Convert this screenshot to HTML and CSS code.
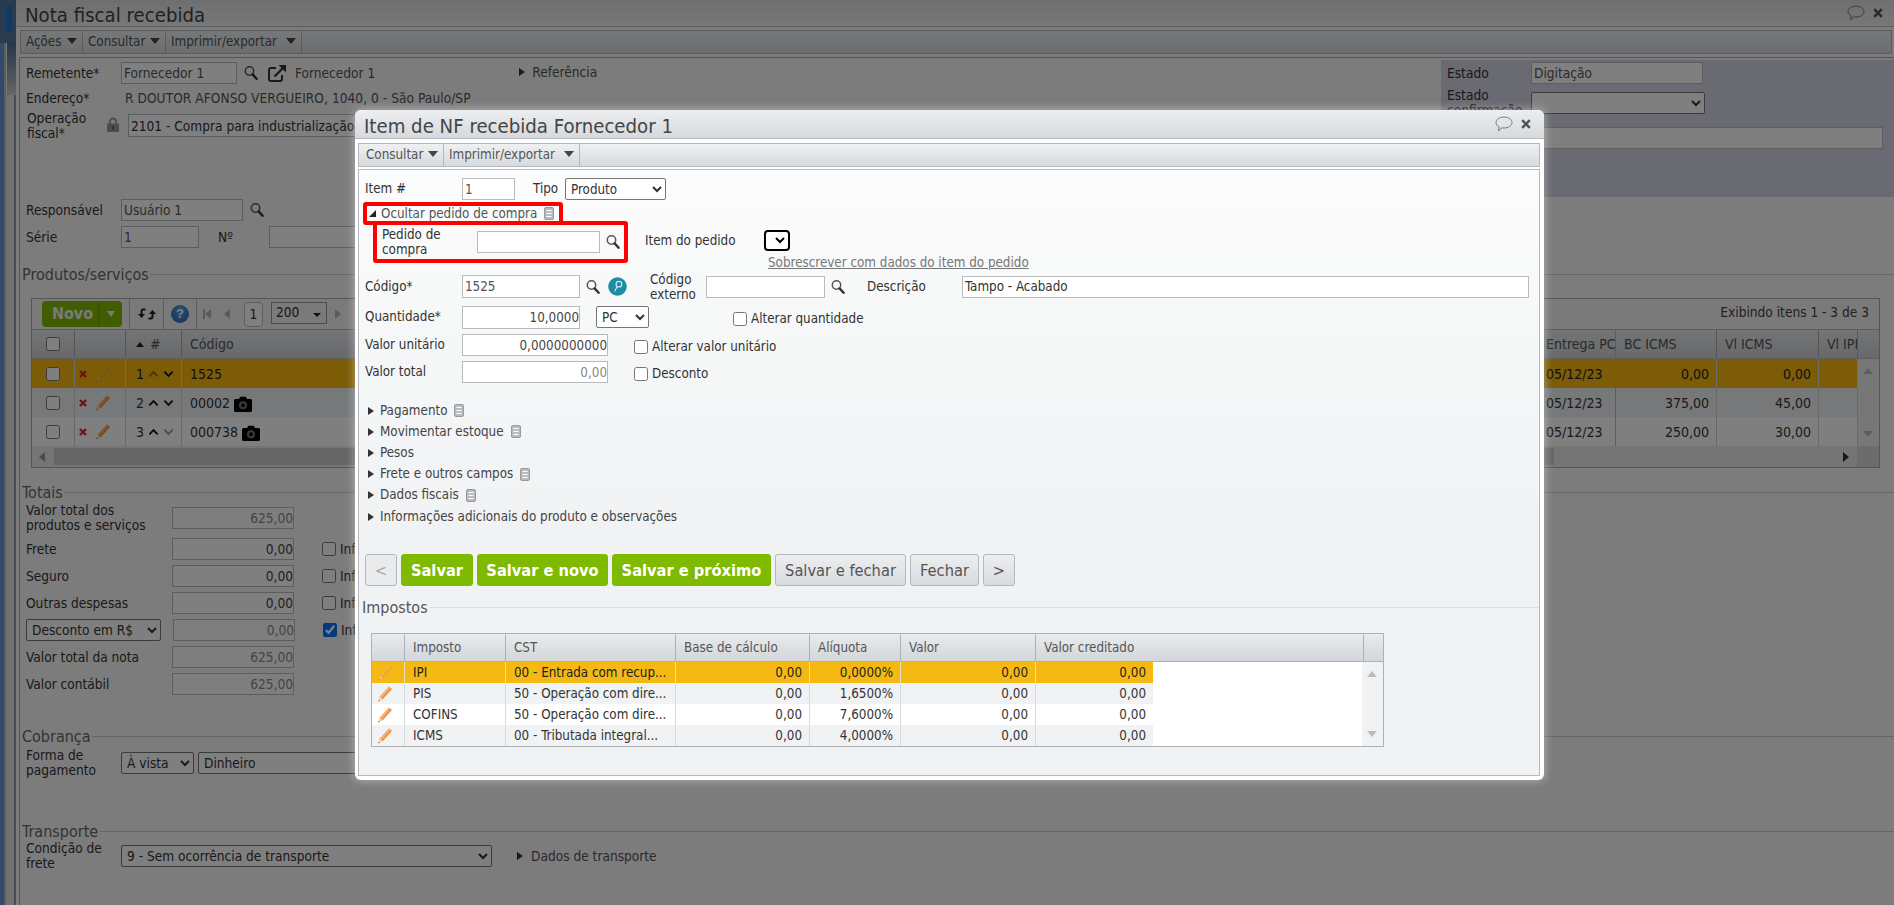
FILE: index.html
```html
<!DOCTYPE html>
<html lang="pt-BR">
<head>
<meta charset="utf-8">
<title>Nota fiscal recebida</title>
<link rel="stylesheet" href="styles.css">
</head>
<body>
<svg class="defs" aria-hidden="true">
  <symbol id="search" viewBox="0 0 14 16"><circle cx="5.500" cy="6" r="4.200" fill="#fff" fill-opacity=".25" stroke="#555" stroke-width="1.500"/><path d="M8.600 9.400l4 4.400" stroke="#333" stroke-width="2.400" stroke-linecap="round"/></symbol>
  <symbol id="doc" viewBox="0 0 10 13"><rect x=".5" y=".5" width="9" height="12" rx="1.500" fill="#b9bcbe" stroke="#999"/><path d="M2.500 3.500h5M2.500 6.500h5M2.500 9.500h5" stroke="#fff" stroke-width="1.200"/></symbol>
  <symbol id="pencil" viewBox="0 0 16 17"><path d="M12 1.500l3 2.500-9.500 10.500-3-2.500z" fill="#f0923b"/><path d="M12 1.500l1.500 1.200L4 13.400 2.500 12z" fill="#f6b276"/><path d="M2.500 12l3 2.500-4.200 1.800z" fill="#f4dcb8"/><path d="M1.900 14.800l1 .9-1.600.6z" fill="#444"/></symbol>
  <symbol id="cross" viewBox="0 0 8 8"><path d="M1 1l6 6M7 1L1 7" stroke="#d4262c" stroke-width="2.400"/></symbol>
  <symbol id="camera" viewBox="0 0 18 16"><path d="M1.500 3H5l1.200-2.200h5.600L13 3h3.500A1.500 1.500 0 0 1 18 4.500v10a1.500 1.500 0 0 1-1.500 1.500h-15A1.500 1.500 0 0 1 0 14.500v-10A1.500 1.500 0 0 1 1.500 3z" fill="#000"/><circle cx="9" cy="9.200" r="4" fill="#777"/><circle cx="9" cy="9.200" r="2" fill="#000"/></symbol>
  <symbol id="up" viewBox="0 0 12 8"><path d="M1.500 6.500L6 2l4.500 4.500" fill="none" stroke="#111" stroke-width="2"/></symbol>
  <symbol id="down" viewBox="0 0 12 8"><path d="M1.500 1.500L6 6l4.500-4.500" fill="none" stroke="#111" stroke-width="2"/></symbol>
  <symbol id="comment" viewBox="0 0 18 16"><path d="M9 1c4.400 0 8 2.400 8 5.500S13.400 12 9 12c-.8 0-1.600-.1-2.300-.2L3.500 15l.6-4.200C2.200 9.800 1 8.300 1 6.500 1 3.400 4.600 1 9 1z" fill="none" stroke="#777" stroke-width="1"/></symbol>
  <symbol id="close" viewBox="0 0 10 10"><path d="M1.200 1.200l7.600 7.600M8.800 1.200L1.200 8.800" stroke="#555" stroke-width="2.600"/></symbol>
  <symbol id="external" viewBox="0 0 19 18"><path d="M8 4H3a2 2 0 0 0-2 2v9a2 2 0 0 0 2 2h9a2 2 0 0 0 2-2v-4" fill="none" stroke="#333" stroke-width="2"/><path d="M6.500 12.500L15 4" stroke="#333" stroke-width="2.200"/><path d="M10.500 1H18v7.500z" fill="#333"/></symbol>
  <symbol id="lock" viewBox="0 0 12 15"><path d="M3 7V4.500a3 3 0 0 1 6 0V7" fill="none" stroke="#999" stroke-width="1.800"/><rect y="6.500" width="12" height="8.500" rx="1" fill="#999"/><rect x="5" y="9" width="2" height="3.500" fill="#666"/></symbol>
  <symbol id="key" viewBox="0 0 20 20"><circle cx="10" cy="10" r="9.800" fill="#1c8ca2"/><circle cx="11.500" cy="7.500" r="3" fill="none" stroke="#cfe8ee" stroke-width="1.300"/><path d="M9.800 10l-2.800 5" stroke="#cfe8ee" stroke-width="1.300"/></symbol>
  <symbol id="refresh" viewBox="0 0 18 16"><path d="M7.500 3.500H5.200C4 3.500 3.500 4.200 3.500 5.500V9" fill="none" stroke="#222" stroke-width="2"/><path d="M0 8h7l-3.500 4z" fill="#222"/><path d="M10.500 12.500h2.300c1.200 0 1.700-.7 1.700-2V7" fill="none" stroke="#222" stroke-width="2"/><path d="M18 8h-7l3.500-4z" fill="#222"/></symbol>
</svg>

<div class="desktop">
  <div class="rail"><div class="rail-tab"></div><div class="rail-frame"></div></div>

  <main class="win">
    <header class="win-title">
      <h1>Nota fiscal recebida</h1>
      <div class="title-icons"><svg class="ic-comment"><use href="#comment"/></svg><svg class="ic-close"><use href="#close"/></svg></div>
    </header>
    <nav class="menubar">
      <span class="menu m-acoes">Ações<i class="caret"></i></span>
      <span class="menu m-consultar">Consultar<i class="caret"></i></span>
      <span class="menu m-imprimir">Imprimir/exportar<i class="caret"></i></span>
    </nav>
    <div class="win-body">
      <div class="top">
        <div class="top-left">
          <div class="row r-remetente">
            <label class="lbl w95">Remetente*</label>
            <input class="field w116" value="Fornecedor 1">
            <svg class="ic-search ml7"><use href="#search"/></svg>
            <svg class="ic-external"><use href="#external"/></svg>
            <span class="supplier">Fornecedor 1</span>
            <span class="tri ref-tri"></span><span class="ref-text">Referência</span>
          </div>
          <div class="row r-endereco"><label class="lbl w99">Endereço*</label><span class="addr">R DOUTOR AFONSO VERGUEIRO, 1040, 0 - São Paulo/SP</span></div>
          <div class="row r-operacao">
            <label class="lbl2 w81">Operação fiscal*</label>
            <svg class="ic-lock"><use href="#lock"/></svg>
            <input class="field w260" value="2101 - Compra para industrialização">
          </div>
          <div class="row r-resp"><label class="lbl w95">Responsável</label><input class="field w122" value="Usuário 1"><svg class="ic-search ml7"><use href="#search"/></svg></div>
          <div class="row r-serie"><label class="lbl w95">Série</label><input class="field w78" value="1"><label class="lbl no">Nº</label><input class="field w100"></div>
        </div>
        <aside class="state">
          <div class="state-row s1"><label class="lbl w84">Estado</label><input class="field w172" value="Digitação"></div>
          <div class="state-row s2"><label class="lbl2 w84">Estado confirmação</label><select class="sel w174"><option></option></select></div>
          <div class="state-row s3"><span class="w84"></span><input class="field w352"></div>
        </aside>
      </div>

      <h2 class="sec s-prod"><span>Produtos/serviços</span></h2>
      <section class="grid">
        <div class="grid-bar">
          <div class="novo"><span class="novo-t">Novo</span><span class="novo-c"><i></i></span></div>
          <span class="vsep"></span><svg class="ic-refresh"><use href="#refresh"/></svg>
          <span class="vsep"></span><span class="help">?</span>
          <span class="vsep"></span>
          <span class="pg pg-first"></span><span class="pg pg-prev"></span>
          <span class="pg-num">1</span>
          <span class="pg-size">200<i></i></span>
          <span class="pg pg-next"></span>
          <span class="showing">Exibindo itens 1 - 3 de 3</span>
        </div>
        <div class="g-row g-head">
          <div class="cc"><input type="checkbox" class="chk"></div><div></div>
          <div class="num-h"><i></i>#</div><div>Código</div>
          <div class="ent">Entrega PC</div><div>BC ICMS</div><div>Vl ICMS</div><div class="clip">Vl IPI</div><div></div>
        </div>
        <div class="g-row g-sel">
          <div class="cc"><input type="checkbox" class="chk"></div>
          <div class="act"><svg class="ic-x"><use href="#cross"/></svg><svg class="ic-pen dim"><use href="#pencil"/></svg></div>
          <div class="num">1<svg class="ic-ch dim"><use href="#up"/></svg><svg class="ic-ch"><use href="#down"/></svg></div>
          <div class="code">1525</div>
          <div class="ent">05/12/23</div><div class="r">0,00</div><div class="r">0,00</div><div></div><div class="g-side"><i class="a-up"></i></div>
        </div>
        <div class="g-row g-alt">
          <div class="cc"><input type="checkbox" class="chk"></div>
          <div class="act"><svg class="ic-x"><use href="#cross"/></svg><svg class="ic-pen"><use href="#pencil"/></svg></div>
          <div class="num">2<svg class="ic-ch"><use href="#up"/></svg><svg class="ic-ch"><use href="#down"/></svg></div>
          <div class="code">00002<svg class="ic-cam"><use href="#camera"/></svg></div>
          <div class="ent">05/12/23</div><div class="r">375,00</div><div class="r">45,00</div><div></div><div class="g-side"></div>
        </div>
        <div class="g-row g-plain">
          <div class="cc"><input type="checkbox" class="chk"></div>
          <div class="act"><svg class="ic-x"><use href="#cross"/></svg><svg class="ic-pen"><use href="#pencil"/></svg></div>
          <div class="num">3<svg class="ic-ch"><use href="#up"/></svg><svg class="ic-ch dim"><use href="#down"/></svg></div>
          <div class="code">000738<svg class="ic-cam"><use href="#camera"/></svg></div>
          <div class="ent">05/12/23</div><div class="r">250,00</div><div class="r">30,00</div><div></div><div class="g-side"><i class="a-down"></i></div>
        </div>
        <div class="hscroll"><i class="h-left"></i><span class="thumb"></span><i class="h-right"></i><span class="corner"></span></div>
      </section>

      <h2 class="sec s-tot"><span>Totais</span></h2>
      <div class="tot">
        <div class="trow t0"><label class="lbl2 w146">Valor total dos<br>produtos e serviços</label><input class="field w122 num-in ro" value="625,00"></div>
        <div class="trow"><label class="lbl w146">Frete</label><input class="field w122 num-in" value="0,00"><input type="checkbox" class="chk tchk"><span class="inf">Informar</span></div>
        <div class="trow"><label class="lbl w146">Seguro</label><input class="field w122 num-in" value="0,00"><input type="checkbox" class="chk tchk"><span class="inf">Informar</span></div>
        <div class="trow"><label class="lbl w146">Outras despesas</label><input class="field w122 num-in" value="0,00"><input type="checkbox" class="chk tchk"><span class="inf">Informar</span></div>
        <div class="trow"><select class="sel w135"><option>Desconto em R$</option></select><input class="field w122 num-in ro ml12" value="0,00"><input type="checkbox" class="chk tchk" checked><span class="inf">Informar</span></div>
        <div class="trow"><label class="lbl w146">Valor total da nota</label><input class="field w122 num-in ro" value="625,00"></div>
        <div class="trow"><label class="lbl w146">Valor contábil</label><input class="field w122 num-in ro" value="625,00"></div>
      </div>

      <h2 class="sec s-cob"><span>Cobrança</span></h2>
      <div class="row r-forma"><label class="lbl2 w95">Forma de pagamento</label><select class="sel w73"><option>À vista</option></select><select class="sel w190 ml4"><option>Dinheiro</option></select></div>

      <h2 class="sec s-tra"><span>Transporte</span></h2>
      <div class="row r-frete"><label class="lbl2 w95">Condição de frete</label><select class="sel w371"><option>9 - Sem ocorrência de transporte</option></select><span class="tri dt-tri"></span><span class="dt-text">Dados de transporte</span></div>
    </div>
  </main>
</div>

<div class="overlay"></div>

<div class="modal" role="dialog">
  <header class="m-title">
    <h2>Item de NF recebida Fornecedor 1</h2>
    <div class="title-icons"><svg class="ic-comment"><use href="#comment"/></svg><svg class="ic-close"><use href="#close"/></svg></div>
  </header>
  <nav class="menubar m-menubar">
    <span class="menu mm-consultar">Consultar<i class="caret"></i></span>
    <span class="menu mm-imprimir">Imprimir/exportar<i class="caret"></i></span>
  </nav>
  <div class="m-panel">
    <div class="row mr-item">
      <label class="lbl w97">Item #</label><input class="field w53" value="1">
      <label class="lbl tipo">Tipo</label><select class="sel w101"><option>Produto</option></select>
    </div>
    <div class="toggle-box"><span class="tri-open"></span><span class="toggle-t">Ocultar pedido de compra</span><svg class="ic-doc"><use href="#doc"/></svg></div>
    <div class="row mr-pedido">
      <div class="red-box"><label class="lbl2 w95">Pedido de compra</label><input class="field w123" value=""><svg class="ic-search ml6"><use href="#search"/></svg></div>
      <div class="ped-right">
        <div class="ped-line"><label class="lbl w119">Item do pedido</label><select class="sel-black"><option></option></select></div>
        <a class="link" href="#">Sobrescrever com dados do item do pedido</a>
      </div>
    </div>
    <div class="row mr-codigo">
      <label class="lbl w97">Código*</label><input class="field w118" value="1525"><svg class="ic-search ml6"><use href="#search"/></svg><svg class="ic-key"><use href="#key"/></svg>
      <label class="lbl2 w56 ext">Código externo</label><input class="field w119"><svg class="ic-search ml6"><use href="#search"/></svg>
      <label class="lbl w95 desc">Descrição</label><input class="field w567 dark" value="Tampo - Acabado">
    </div>
    <div class="row mr-qtd">
      <label class="lbl w97">Quantidade*</label><input class="field w118 num-in" value="10,0000"><select class="sel w53 ml16"><option>PC</option></select>
      <label class="chk-l l-qtd"><input type="checkbox" class="chk">Alterar quantidade</label>
    </div>
    <div class="row mr-val">
      <label class="lbl w97">Valor unitário</label><input class="field w146 num-in" value="0,0000000000">
      <label class="chk-l l-val"><input type="checkbox" class="chk">Alterar valor unitário</label>
    </div>
    <div class="row mr-tot">
      <label class="lbl w97">Valor total</label><input class="field w146 num-in ro2" value="0,00">
      <label class="chk-l l-val"><input type="checkbox" class="chk">Desconto</label>
    </div>

    <ul class="acc">
      <li><span class="tri"></span>Pagamento<svg class="ic-doc"><use href="#doc"/></svg></li>
      <li><span class="tri"></span>Movimentar estoque<svg class="ic-doc"><use href="#doc"/></svg></li>
      <li><span class="tri"></span>Pesos</li>
      <li><span class="tri"></span>Frete e outros campos<svg class="ic-doc"><use href="#doc"/></svg></li>
      <li><span class="tri"></span>Dados fiscais<svg class="ic-doc"><use href="#doc"/></svg></li>
      <li><span class="tri"></span>Informações adicionais do produto e observações</li>
    </ul>

    <div class="actions">
      <button class="btn b-prev">&lt;</button>
      <button class="btn green b-s1">Salvar</button>
      <button class="btn green b-s2">Salvar e novo</button>
      <button class="btn green b-s3">Salvar e próximo</button>
      <button class="btn b-s4">Salvar e fechar</button>
      <button class="btn b-s5">Fechar</button>
      <button class="btn b-next">&gt;</button>
    </div>

    <h3 class="sec m-sec"><span>Impostos</span></h3>
    <section class="tax">
      <div class="tx-row tx-head"><div></div><div>Imposto</div><div>CST</div><div>Base de cálculo</div><div>Alíquota</div><div>Valor</div><div>Valor creditado</div><div></div></div>
      <div class="tx-body">
        <div class="tx-rows">
          <div class="tx-row tx-sel"><div class="pen"><svg class="ic-pen dim"><use href="#pencil"/></svg></div><div>IPI</div><div>00 - Entrada com recup...</div><div class="r">0,00</div><div class="r">0,0000%</div><div class="r">0,00</div><div class="r">0,00</div></div>
          <div class="tx-row tx-alt"><div class="pen"><svg class="ic-pen"><use href="#pencil"/></svg></div><div>PIS</div><div>50 - Operação com dire...</div><div class="r">0,00</div><div class="r">1,6500%</div><div class="r">0,00</div><div class="r">0,00</div></div>
          <div class="tx-row"><div class="pen"><svg class="ic-pen"><use href="#pencil"/></svg></div><div>COFINS</div><div>50 - Operação com dire...</div><div class="r">0,00</div><div class="r">7,6000%</div><div class="r">0,00</div><div class="r">0,00</div></div>
          <div class="tx-row tx-alt"><div class="pen"><svg class="ic-pen"><use href="#pencil"/></svg></div><div>ICMS</div><div>00 - Tributada integral...</div><div class="r">0,00</div><div class="r">4,0000%</div><div class="r">0,00</div><div class="r">0,00</div></div>
        </div>
        <div class="tx-scroll"><i class="a-up"></i><i class="a-down"></i></div>
      </div>
    </section>
  </div>
</div>
</body>
</html>
```

FILE: styles.css
```css
:root { --ui: "DejaVu Sans Condensed", "DejaVu Sans", sans-serif; }
* { box-sizing: border-box; }
html, body { margin: 0; padding: 0; height: 905px; overflow: hidden; }
body { font: 13.3px/16px var(--ui); color: #333; background: #f8f8f8; position: relative; }
.defs { position: absolute; width: 0; height: 0; }
h1, h2, h3 { margin: 0; font-weight: normal; }
svg { flex: none; display: block; }
input, select, button { font: 13.3px var(--ui); margin: 0; }

.desktop { display: flex; width: 1894px; height: 905px; }
.rail { width: 16px; flex: none; background: linear-gradient(90deg, #6592d6 0 4px, #bbb 4px 6px, #e4e4e4 6px 14px, #999 14px); position: relative; }
.rail-tab { height: 43px; background: #54749f; padding-top: 6px; }
.rail-tab::before { content: ""; display: block; width: 6px; height: 25px; margin-left: 6px; background: #1e74cc; }
.rail-frame { height: 52px; margin-left: 6px; background: linear-gradient(#4c6b93, #ccc); border-left: 1px solid #eee; }

.win { flex: 1; min-width: 0; display: flex; flex-direction: column; }
.win-title { height: 27px; flex: none; display: flex; justify-content: space-between; align-items: center; padding: 3px 11px 0 9px; background: linear-gradient(#dcdee0, #f0f0f0); border-bottom: 1px solid #b4b8bc; }
.win-title h1 { font-size: 20.2px; color: #444; line-height: 24px; }
.title-icons { display: flex; align-items: center; gap: 8px; }
.win-title .title-icons { margin-top: -3px; }
.ic-comment { width: 18px; height: 16px; }
.ic-close { width: 10px; height: 10px; }

.menubar { display: flex; flex: none; height: 24px; margin: 3px 2px 0 4px; background: linear-gradient(#eef0f2, #d8dbde); border: 1px solid #b4b8bc; color: #555; }
.menu { display: flex; align-items: center; padding-left: 5px; border-right: 1px solid #b4b8bc; position: relative; }
.caret { position: absolute; right: 5px; top: 7px; border: 5px solid transparent; border-top: 6px solid #444; border-bottom: 0; }
.m-acoes { width: 62px; }
.m-consultar { width: 83px; }
.m-imprimir { width: 136px; }

.win-body { flex: 1; margin: 3px 0 0 3px; padding-left: 6px; border: 1px solid #aaa; border-right: 0; border-bottom: 0; font-size: 13.6px; }
.win-body input, .win-body select { font-size: 13.6px; }
.top { display: flex; height: 190px; }
.top-left { flex: 1; padding-top: 4px; }
.row { display: flex; align-items: center; }
.lbl { color: #333; flex: none; white-space: nowrap; }
.lbl2 { color: #333; flex: none; line-height: 15px; }
.w56 { width: 56px; } .w81 { width: 81px; } .w84 { width: 84px; flex: none; } .w95 { width: 95px; } .w97 { width: 97px; } .w99 { width: 99px; } .w119 { width: 119px; } .w146 { width: 146px; }
.field { height: 22px; padding: 0 2px; border: 1px solid #b8babc; background: #fff; color: #555; flex: none; border-radius: 0; outline: 0; }
.w53 { width: 53px; } .w73 { width: 73px; } .w78 { width: 78px; } .w100 { width: 100px; } .w101 { width: 101px; } .w116 { width: 116px; } .w118 { width: 118px; } .w122 { width: 122px; } .w123 { width: 123px; } .w135 { width: 135px; } .w172 { width: 172px; } .w174 { width: 174px; } .w190 { width: 190px; } .w260 { width: 260px; } .w352 { width: 352px; } .w371 { width: 371px; } .w567 { width: 567px; }
.field.w118 { height: 23px; }
.dark { color: #333; }
.num-in { text-align: right; padding-right: 0; color: #444; }
.ro { color: #888; background: #fdfdfd; }
.ro2 { color: #888; }
.sel { height: 22px; padding: 0 0 0 1px; border: 1px solid #767676; border-radius: 2px; background: #fff; color: #333; flex: none; }
.ic-search { width: 14px; height: 16px; }
.ml4 { margin-left: 4px; } .ml6 { margin-left: 6px; } .ml7 { margin-left: 7px; } .ml12 { margin-left: 12px; } .ml16 { margin-left: 16px; }
.ic-external { width: 19px; height: 18px; margin-left: 10px; }
.supplier { margin-left: 8px; color: #555; }
.tri { display: inline-block; border: 4px solid transparent; border-left: 6px solid #333; border-right: 0; flex: none; }
.ref-tri { margin-left: 144px; margin-top: -3px; }
.ref-text { margin-left: 7px; margin-top: -3px; color: #555; }
.r-remetente { height: 22px; }
.r-endereco { margin-top: 4px; height: 26px; align-items: flex-start; padding-top: 2px; }
.addr { color: #555; letter-spacing: .05px; }
.r-operacao { height: 23px; }
.r-operacao .lbl2 { padding-left: 1px; }
.ic-lock { width: 12px; height: 15px; margin-top: -2px; }
.r-operacao .field { margin-left: 9px; height: 23px; color: #333; }
.r-resp { margin-top: 62px; height: 22px; }
.r-serie { margin-top: 5px; height: 22px; }
.no { margin-left: 19px; width: 51px; }

.state { width: 453px; flex: none; margin-top: 2px; height: 137px; background: #d4d4e4; padding: 2px 0 0 6px; }
.state-row { display: flex; align-items: center; }
.s2 { margin-top: 8px; height: 22px; }
.s3 { margin-top: 13px; }

.sec { font-size: 16px; line-height: 18px; color: #666; display: flex; align-items: center; gap: 1px; }
.sec::after { content: ""; flex: 1; height: 1px; background: #ccc; margin-top: -1px; }
.s-prod { margin: 18px 0 0 -6px; padding-left: 2px; height: 18px; }
.s-tot { margin: 16px 0 0 -6px; padding-left: 2px; height: 18px; }
.s-cob { margin: 33px 0 0 -6px; padding-left: 2px; }
.s-tra { margin: 49px 0 0 -6px; padding-left: 2px; }

.grid { margin: 14px 0 0 5px; border: 1px solid #aaa; width: 1849px; height: 170px; background: #f0f0f0; }
.grid-bar { height: 30px; display: flex; align-items: center; padding-left: 10px; background: #f4f4f4; position: relative; }
.novo { width: 80px; height: 26px; display: flex; border-radius: 4px; background: #80ba00; color: #f4f4f4; font: bold 16px/26px var(--ui); }
.novo-t { width: 57px; text-align: center; padding-left: 5px; border-right: 1px solid #6c9e00; }
.novo-c { flex: 1; display: flex; align-items: center; justify-content: center; }
.novo-c i { border: 4px solid transparent; border-top: 6px solid #f4f4f4; border-bottom: 0; }
.vsep { width: 1px; height: 30px; background: #bbb; margin-left: 7px; }
.ic-refresh { width: 18px; height: 16px; margin-left: 8px; }
.help { width: 18px; height: 18px; margin-left: 7px; border-radius: 50%; background: radial-gradient(circle at 50% 35%, #5ea0e8, #1f5fb0); color: #fff; font: bold 13px/18px "Liberation Sans", sans-serif; text-align: center; }
.pg { display: block; border: 5px solid transparent; opacity: .5; }
.pg-first { margin-left: 8px; border-right: 6px solid #777; border-left: 0; box-shadow: -2px 0 0 #777; }
.pg-prev { margin-left: 13px; border-right: 6px solid #777; border-left: 0; }
.pg-next { margin-left: 8px; border-left: 6px solid #777; border-right: 0; }
.pg-num { width: 19px; height: 25px; margin-left: 14px; border: 1px solid #bbb; border-radius: 4px; background: #fff; text-align: center; line-height: 23px; }
.pg-size { width: 56px; height: 22px; margin: -3px 0 0 8px; padding-left: 4px; border: 1px solid #999; background: #f4f4f4; line-height: 18px; position: relative; }
.pg-size i { position: absolute; right: 5px; top: 10px; border: 4px solid transparent; border-top: 4px solid #222; border-bottom: 0; }
.showing { position: absolute; right: 10px; top: 5px; color: #444; font-size: 13.6px; }

.g-row { display: grid; grid-template-columns: 43px 51px 56px 1362px 72px 101px 102px 39px 21px; height: 29px; align-items: stretch; font-size: 14px; }
.g-row > div { display: flex; align-items: center; border-right: 1px solid #d0d0d0; padding-left: 8px; }
.g-row > div:last-child { border-right: 0; }
.g-head { height: 30px; background: linear-gradient(#e8eaec, #cfd2d7); border-top: 1px solid #bbb; border-bottom: 1px solid #bbb; color: #555; }
.g-head > div { border-right-color: #aaa; }
.g-sel { background: #f8b80f; color: #222; }
.g-sel > div { border-right-color: #ddd; }
.g-alt { background: #eff1f3; }
.g-plain { background: #fff; }
.g-row > .cc { justify-content: center; padding: 0; }
.chk { width: 14px; height: 14px; margin: 0; flex: none; }
.g-row > .act { gap: 8px; padding-left: 4px; }
.ic-x { width: 8px; height: 8px; }
.ic-pen { width: 16px; height: 17px; }
.dim { opacity: .45; }
.num-h i { border: 4px solid transparent; border-bottom: 5px solid #222; border-top: 0; margin-right: 6px; }
.g-row > .num, .g-row > .num-h { padding-left: 10px; }
.num { gap: 4px; }
.ic-ch { width: 11px; height: 8px; }
.code { gap: 4px; }
.ic-cam { width: 18px; height: 16px; margin-top: 2px; }
.g-row > .ent { padding-left: 2px; white-space: nowrap; border-right: 1px solid #bbb; }
.g-row > .r { justify-content: flex-end; padding: 0 7px 0 0; }
.clip { overflow: hidden; white-space: nowrap; }
.g-row > .g-side { background: #eee; position: relative; padding: 0; }
.a-up, .a-down { display: block; border: 5px solid transparent; position: absolute; left: 5px; }
.a-up { border-bottom: 6px solid #bbb; border-top: 0; top: 9px; }
.a-down { border-top: 6px solid #bbb; border-bottom: 0; bottom: 9px; }
.hscroll { height: 21px; display: flex; align-items: center; background: #ebebeb; }
.h-left { border: 5px solid transparent; border-right: 6px solid #999; border-left: 0; margin-left: 7px; }
.thumb { width: 1500px; height: 17px; background: #ccc; margin-left: 9px; }
.h-right { border: 5px solid transparent; border-left: 6px solid #333; border-right: 0; margin-left: 289px; }
.corner { flex: 1; height: 21px; background: #d8d8d8; margin-left: 8px; }

.trow { display: flex; align-items: center; height: 22px; margin-top: 5px; }
.trow:nth-child(2) { margin-top: 9px; }
.tchk { margin-left: 28px; }
.inf { margin-left: 4px; }
.r-forma { height: 22px; margin-top: 6px; }
.r-frete { height: 22px; margin-top: 4px; }
.dt-tri { margin-left: 25px; }
.dt-text { margin-left: 8px; color: #555; }

.overlay { position: absolute; inset: 0; background: rgba(0, 0, 0, .5); }

.modal { position: absolute; left: 355px; top: 110px; width: 1189px; height: 670px; padding: 0 4px 4px 3px; display: flex; flex-direction: column; background: #fff; border-radius: 6px; box-shadow: 0 0 8px 1px rgba(255, 255, 255, .4); }
.m-title { height: 29px; flex: none; margin: 0 -4px 0 -3px; padding: 4px 13px 0 9px; display: flex; justify-content: space-between; align-items: center; background: linear-gradient(#eceef0, #d6d9dd); border-radius: 6px 6px 0 0; border-bottom: 1px solid #b8bcc0; }
.m-title h2 { font-size: 20.2px; line-height: 24px; color: #444; }
.m-title .title-icons { margin-top: -4px; }
.m-menubar { height: 24px; margin: 4px 0 0; }
.mm-consultar { width: 85px; padding-left: 7px; }
.mm-imprimir { width: 136px; }
.m-panel { flex: 1; margin-top: 2px; padding-left: 6px; border: 1px solid #b4b8bc; background: linear-gradient(#fbfcfb, #f0f2f4 60%); min-height: 0; }

.mr-item { margin-top: 8px; height: 22px; }
.tipo { margin-left: 18px; width: 32px; }
.toggle-box { width: 200px; height: 23px; margin: 2px 0 0 -2px; padding-left: 2px; border: 4px solid #f00; border-radius: 3px; display: flex; align-items: center; position: relative; z-index: 1; }
.tri-open { width: 0; height: 0; border-left: 7px solid transparent; border-bottom: 7px solid #222; flex: none; }
.toggle-t { margin-left: 5px; color: #555; }
.ic-doc { width: 10px; height: 13px; margin-left: 7px; }
.mr-pedido { margin-top: -4px; align-items: flex-start; }
.red-box { width: 255px; height: 42px; margin-left: 8px; padding-left: 5px; border: 4px solid #f00; border-radius: 3px; display: flex; align-items: center; }
.ped-right { margin-left: 17px; }
.ped-line { display: flex; align-items: center; height: 21px; margin-top: 9px; }
.sel-black { width: 26px; height: 21px; border: 2px solid #000; border-radius: 4px; background: #fff; padding: 0; }
.link { display: block; margin: 5px 0 0 123px; color: #777; text-decoration: underline; white-space: nowrap; line-height: 14px; }
.mr-codigo { margin-top: 5px; height: 23px; }
.ic-key { width: 19px; height: 19px; margin-left: 8px; }
.ext { margin-left: 23px; }
.desc { margin-left: 22px; }
.mr-qtd { margin-top: 8px; height: 22px; }
.chk-l { display: flex; align-items: center; gap: 4px; margin-top: 3px; color: #333; white-space: nowrap; }
.l-qtd { margin-left: 84px; }
.l-val { margin-left: 26px; }
.mr-val { margin-top: 6px; height: 22px; }
.mr-tot { margin-top: 5px; height: 22px; }
.acc { list-style: none; margin: 17px 0 0; padding: 0 0 0 3px; color: #444; }
.acc li { height: 21.2px; display: flex; align-items: center; }
.acc .tri { margin-right: 6px; }
.acc .ic-doc { margin-left: 7px; }
.actions { display: flex; gap: 4px; margin-top: 27px; height: 32px; }
.btn { height: 32px; border: 1px solid #b4b8bc; border-radius: 3px; background: linear-gradient(#eceef0, #d8dbde); color: #555; padding: 0; font-size: 16.3px; }
.green { background: #80ba00; border-color: #80ba00; color: #fff; font: bold 16.3px var(--ui); }
.b-prev { width: 32px; color: #aaa; background: #e8eaec; }
.b-s1 { width: 72px; }
.b-s2 { width: 131px; }
.b-s3 { width: 159px; }
.b-s4 { width: 131px; }
.b-s5 { width: 69px; }
.b-next { width: 32px; }
.m-sec { margin: 13px 0 0 -3px; height: 18px; color: #555; }
.m-sec::after { background: #dcdee0; }
.tax { width: 1013px; height: 114px; margin: 16px 0 0 6px; border: 1px solid #aeb2b6; background: #fff; }
.tx-row { display: grid; grid-template-columns: 33px 101px 170px 134px 91px 135px 117px; height: 21px; background: #fff; width: 781px; }
.tx-row > div { display: flex; align-items: center; padding-left: 8px; border-right: 1px solid #d8dadc; white-space: nowrap; overflow: hidden; }
.tx-row > div:last-child { border-right: 0; }
.tx-row > .r { justify-content: flex-end; padding: 0 7px 0 0; }
.tx-row > .pen { padding-left: 5px; }
.tx-head { height: 28px; width: 100%; grid-template-columns: 33px 101px 170px 134px 91px 135px 328px 1fr; background: linear-gradient(#e9ebed, #d3d6da); border-bottom: 1px solid #aeb2b6; color: #555; }
.tx-head > div { border-right-color: #aeb2b6; }
.tx-sel { background: #f5b914; color: #222; }
.tx-sel > div { border-right-color: #e8e0c0; }
.tx-alt { background: #f0f2f4; }
.tx-body { display: flex; justify-content: space-between; height: 84px; }
.tx-scroll { width: 21px; background: #f0f2f4; position: relative; }
```
